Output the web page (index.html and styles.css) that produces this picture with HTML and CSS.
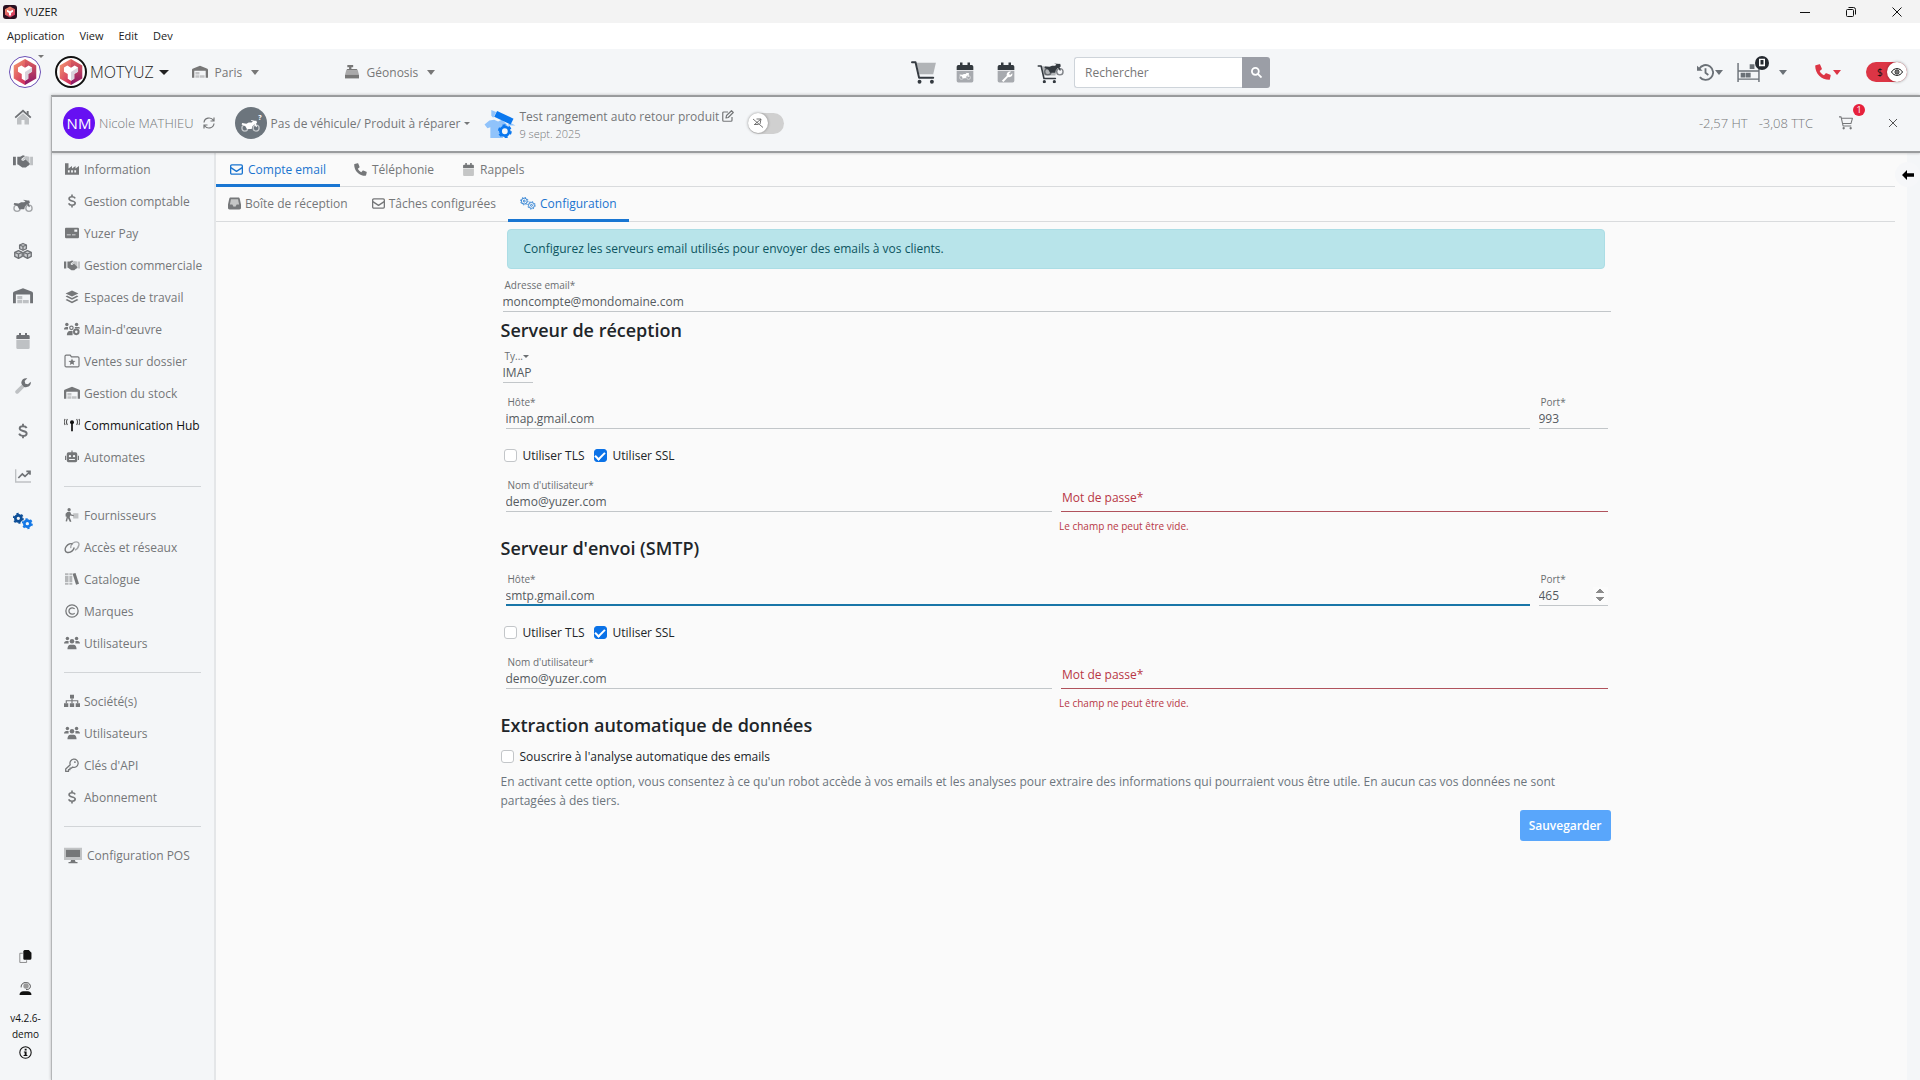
FILE: index.html
```html
<!DOCTYPE html>
<html lang="fr">
<head>
    <meta charset="UTF-8">
    <meta name="viewport" content="width=device-width, initial-scale=1.0">
    <title>YUZER</title>
    <link rel="stylesheet" href="styles.css">
</head>
<body>
    <!-- icons shared by the menus -->
    <svg class="sprite" xmlns="http://www.w3.org/2000/svg">
        <defs>
            <linearGradient id="g-left" x1="0" y1="0" x2="0.6" y2="1">
                <stop offset="0" stop-color="#f6a070"/><stop offset="1" stop-color="#d3365f"/>
            </linearGradient>
            <linearGradient id="g-right" x1="0" y1="0" x2="0" y2="1">
                <stop offset="0" stop-color="#e0605e"/><stop offset="1" stop-color="#8c1668"/>
            </linearGradient>
        </defs>
        <symbol id="i-logo" viewBox="0 0 24 24">
            <path fill="url(#g-left)" d="M12 0L1.600 6v12L12 24z"/>
            <path fill="url(#g-right)" d="M12 0l10.400 6v12L12 24z"/>
            <path fill="#fff" d="M5.500 7.800L8.600 6 12 8l3.400-2 3.100 1.800v4L15 13.800v4.400L12 20l-3-1.800v-4.400l-3.500-2z"/>
            <path fill="#d9d3dc" d="M12 12l6.500-4.200v4L15 13.800v4.400L12 20z"/>
        </symbol>
        <symbol id="i-home" viewBox="0 0 24 24">
            <path opacity=".4" d="M12 7l8 7v8h-6v-6h-4v6H4v-8z"/>
            <path d="M12 2L.8 12l1.600 1.800L12 5.300l9.600 8.500 1.600-1.800L19.500 8.700V4h-2.500v2.500z"/>
        </symbol>
        <symbol id="i-handshake" viewBox="0 0 28 24">
            <path d="M0 6h4v12H0zM6 6h4l4-2 3 1-5 4c-1 2 1 3.500 3 2.500l2.500-2 6 6c0 2-1 3-2.500 3L18 21l-5 0-6-4H6z"/>
            <path opacity=".4" d="M24 6h4v12h-4zM18 5l5 1v9l-6-6-3 2-1-1z"/>
        </symbol>
        <symbol id="i-moto" viewBox="0 0 32 20">
            <g opacity=".6" fill="none" stroke="currentColor" stroke-width="2.200"><circle cx="6.500" cy="13.500" r="5"/><circle cx="25.500" cy="13.500" r="5"/></g>
            <path d="M2 5l7 1 4-2h5l2-2-3-1V0l6 1 3 0 1 4-2 1 2 5-1.500 1-3-5-3.500 4-1 4h-8l-3-5-6-2.500z"/>
        </symbol>
        <symbol id="i-cubes" viewBox="0 0 24 24">
            <g fill="currentColor" fill-opacity=".3" stroke="currentColor" stroke-width="1.800" stroke-linejoin="round"><path d="M12 2l4.500 2v5L12 11 7.500 9V4zM6 11.500l5 2.200v5.600L6 21.800 1 19.300v-5.600zM18 11.500l5 2.200v5.600l-5 2.500-5-2.500v-5.600z"/><path d="M7.500 4L12 6l4.500-2M12 6v5M1 13.700L6 16l5-2.300M6 16v5.500M13 13.700l5 2.300 5-2.300M18 16v5.500" fill="none"/></g>
        </symbol>
        <symbol id="i-warehouse" viewBox="0 0 28 24">
            <path d="M0 22V8.500C0 7 .7 6.300 2 5.700L14 1l12 4.700c1.300.6 2 1.300 2 2.800V22h-4V10H4v12z"/>
            <path opacity=".4" d="M6 12h7v4.500H6zM6 17.500h7V22H6zM14 17.500h8V22h-8z"/>
        </symbol>
        <symbol id="i-calendar" viewBox="0 0 24 24">
            <path opacity=".4" d="M2 10h20v12a2 2 0 0 1-2 2H4a2 2 0 0 1-2-2z"/>
            <path d="M2 9V5a2 2 0 0 1 2-2h2V0h3v3h6V0h3v3h2a2 2 0 0 1 2 2v4z"/>
        </symbol>
        <symbol id="i-wrench" viewBox="0 0 24 24">
            <path opacity=".4" d="M10 10l4 4-8.800 8.800a2.500 2.500 0 0 1-4-4z"/>
            <path d="M23.500 5.500l-4 4-4-1-1-4 4-4C14 -.5 10 2 9.500 6.500c0 2 .5 3 1.500 4.500l2 2c5 2.500 12-1 10.500-7.500z"/>
        </symbol>
        <symbol id="i-dollar" viewBox="0 0 24 24">
            <path fill="none" stroke="currentColor" stroke-width="2.800" d="M17.500 7.500C16.500 5.500 14.500 4.800 12 4.800c-3 0-5 1.300-5 3.500 0 5 10.500 2.300 10.500 7.300 0 2.400-2.300 3.700-5.500 3.700-3 0-5-1.300-5.800-3.300M12 1v4M12 19v4"/>
        </symbol>
        <symbol id="i-chart" viewBox="0 0 24 24">
            <path opacity=".4" d="M0 2h2v18h22v2H0z"/>
            <path fill="none" stroke="currentColor" stroke-width="2.500" d="M5 15l6-6 4 3.500L22 6M17 5h5.500v5"/>
        </symbol>
        <symbol id="i-gears" viewBox="0 0 30 24">
            <g fill="none" stroke="currentColor"><circle cx="8" cy="8" r="4.500" stroke-width="4"/><circle cx="8" cy="8" r="7" stroke-width="2.500" stroke-dasharray="3.300 4.030"/></g>
            <g fill="none" stroke="#1478e6"><circle cx="21.500" cy="16" r="4.500" stroke-width="4"/><circle cx="21.500" cy="16" r="7" stroke-width="2.500" stroke-dasharray="3.300 4.030"/></g>
        </symbol>
        <symbol id="i-gears-o" viewBox="0 0 30 24">
            <g fill="none" stroke="currentColor" stroke-width="1.600"><circle cx="8" cy="7.500" r="5.500"/><circle cx="8" cy="7.500" r="1.800"/><circle cx="8" cy="7.500" r="7" stroke-dasharray="2.500 3"/><circle cx="21.500" cy="15.500" r="5.500"/><circle cx="21.500" cy="15.500" r="1.800"/><circle cx="21.500" cy="15.500" r="7" stroke-dasharray="2.500 3"/></g>
        </symbol>
        <symbol id="i-factory" viewBox="0 0 24 24">
            <path fill-rule="evenodd" d="M0 2h6v9l6-4v4l6-4v4l6-4v15H0zM5 14v4h3v-4zm5.500 0v4h3v-4zm5.500 0v4h3v-4z"/>
        </symbol>
        <symbol id="i-card" viewBox="0 0 24 24">
            <path fill-rule="evenodd" d="M2 3h20a2 2 0 0 1 2 2v14a2 2 0 0 1-2 2H2a2 2 0 0 1-2-2V5c0-1.200.8-2 2-2zm14 3v4h5V6zM3 14.500V16h7v-1.500zm9 0V16h6v-1.500z"/>
        </symbol>
        <symbol id="i-layers" viewBox="0 0 24 24">
            <path d="M12 1l11 5-11 5L1 6z"/><path d="M3.500 9.500L12 13.500l8.500-4L23 11l-11 5.500L1 11z"/><path d="M3.500 15.500L12 19.500l8.500-4L23 17l-11 5.500L1 17z"/>
        </symbol>
        <symbol id="i-users" viewBox="0 0 28 24">
            <circle cx="6" cy="4" r="3"/><circle cx="22" cy="4" r="3"/><circle cx="14" cy="9" r="4"/>
            <path d="M0 13c0-3 2-4.500 4-4.500h4V13zM28 13c0-3-2-4.500-4-4.500h-4V13zM6 23c0-5 2-8 5-8h6c3 0 5 3 5 8z"/>
        </symbol>
        <symbol id="i-staff" viewBox="0 0 28 24">
            <circle cx="5" cy="4" r="3"/><circle cx="22" cy="4" r="3"/><circle cx="13" cy="10" r="3" fill="none" stroke="currentColor" stroke-width="2"/>
            <path d="M0 13c0-3 1-4.500 4-4.500h3V13zM28 11c0-2-1.500-2.500-4-2.500h-5V11zM5 23c0-4.500 2-7.500 5-7.500h5V23z"/>
            <circle cx="21.500" cy="17" r="4" fill="none" stroke="currentColor" stroke-width="3.500"/>
        </symbol>
        <symbol id="i-folder" viewBox="0 0 26 24">
            <path fill="none" stroke="currentColor" stroke-width="2" stroke-linejoin="round" d="M3 2h7l2 3h11a2 2 0 0 1 2 2v13a2 2 0 0 1-2 2H3a2 2 0 0 1-2-2V4c0-1.200.8-2 2-2z"/>
            <path d="M13 7.500l1.700 4 4.300.4-3.300 2.800 1 4.200-3.700-2.300-3.700 2.300 1-4.200L7 11.900l4.300-.4z"/>
        </symbol>
        <symbol id="i-antenna" viewBox="0 0 28 24">
            <circle cx="14" cy="7" r="3.500"/><path d="M12.500 8h3v15h-3z"/>
            <path opacity=".7" fill="none" stroke="currentColor" stroke-width="2" d="M6 1.500c-2 3-2 7.500 0 10.500M2 1.500c-2 3-2 7.500 0 10.500M22 1.500c2 3 2 7.500 0 10.500M26 1.500c2 3 2 7.500 0 10.500"/>
        </symbol>
        <symbol id="i-robot" viewBox="0 0 24 24">
            <path fill-rule="evenodd" d="M11 1h2v3h5a3 3 0 0 1 3 3v11a3 3 0 0 1-3 3H6a3 3 0 0 1-3-3V7a3 3 0 0 1 3-3h5zM8.500 8.500a2 2 0 1 0 0 4 2 2 0 0 0 0-4zm7 0a2 2 0 1 0 0 4 2 2 0 0 0 0-4zM7 15.500V17h10v-1.500z"/><path d="M0 10h2v7H0zM22 10h2v7h-2z"/>
        </symbol>
        <symbol id="i-carry" viewBox="0 0 24 24">
            <circle cx="7" cy="3" r="2.800"/><path d="M4 7h5l2 4 4 1v2l-6-1-1 3 3 7-2.500 1L5 17l-1.500 6L1 22.500 3 15l-2-.5V10z"/><path opacity=".4" d="M14 9h9v9h-9z"/>
        </symbol>
        <symbol id="i-link" viewBox="0 0 28 24">
            <g fill="none" stroke="currentColor" stroke-width="2.500"><path d="M18 13c-2 6-7 9-12 8.500C1 20.500 1 15 4 11s8-6 11-4"/><path opacity=".6" d="M12 14c-1-4 2-9 7-10.500S27 5 26 9s-4 7.500-7 8.500"/></g>
        </symbol>
        <symbol id="i-books" viewBox="0 0 24 24">
            <path opacity=".5" d="M0 2h6v3H0zM0 6.500h6v11H0zM0 19h6v3H0zM7.500 2h5v3h-5zM7.500 6.500h5v11h-5zM7.500 19h5v3h-5z"/><path d="M13 3l5-1.500L24 20l-5 2z"/>
        </symbol>
        <symbol id="i-copyright" viewBox="0 0 24 24">
            <g fill="none" stroke="currentColor" stroke-width="2.200"><circle cx="12" cy="12" r="10.500"/><path d="M16.500 15.500A5.500 5.500 0 1 1 16.500 8.500"/></g>
        </symbol>
        <symbol id="i-sitemap" viewBox="0 0 28 24">
            <path d="M10.500 1h7v6.500h-7zM0 16h7.500v6.500H0zM10.200 16h7.600v6.500h-7.600zM20.500 16H28v6.500h-7.500z"/>
            <path fill="none" stroke="currentColor" stroke-width="2" d="M14 7v9M4 16v-4.500h20V16"/>
        </symbol>
        <symbol id="i-key" viewBox="0 0 24 24">
            <path fill="none" stroke="currentColor" stroke-width="2.200" stroke-linejoin="round" d="M9 11.500a7 7 0 1 1 4 4L11 17.500H8.500V20H6v3H1.200v-4z"/><circle cx="17" cy="7" r="1.600"/>
        </symbol>
        <symbol id="i-desktop" viewBox="0 0 28 24">
            <path opacity=".4" fill-rule="evenodd" d="M0 0h28v19H0zM3 3v11h22V3z"/><path d="M3 3h22v11.500H3zM11 19h6l1 3h3v2H7v-2h3z"/>
        </symbol>
        <symbol id="i-mail" viewBox="0 0 24 20">
            <g fill="none" stroke="currentColor" stroke-width="2.400" stroke-linejoin="round"><rect x="1.200" y="1.500" width="21.600" height="17" rx="2"/><path d="M1.500 6.500L12 13.500l10.500-7"/></g>
        </symbol>
        <symbol id="i-phone" viewBox="0 0 24 24">
            <path d="M1.200 1.700L6.500.5c.6-.1 1.100.1 1.300.6l2.400 5.700c.2.500.1 1-.3 1.400L7 10.500c1.500 3 3.500 5 6.500 6.500l2.300-2.900c.4-.4.900-.5 1.400-.3l5.700 2.400c.5.200.7.700.6 1.300l-1.200 5.300c-.1.500-.5.900-1 .9C9.500 23.700.3 14.500.3 2.700c0-.5.4-.9.9-1z"/>
        </symbol>
        <symbol id="i-inbox" viewBox="0 0 24 24">
            <path opacity=".4" d="M5 3h14l3 11-5 1-3 3h-4l-3-3-5-1z"/><path fill-rule="evenodd" d="M5 1h14c1.500 0 2.300.8 2.700 2L24 14v6c0 2-1 3-3 3H3c-2 0-3-1-3-3v-6L2.300 3C2.700 1.800 3.500 1 5 1zm.5 3L3.500 14H8l2 3.500h4l2-3.500h4.500l-2-10z"/>
        </symbol>
        <symbol id="i-cart" viewBox="0 0 28 26">
            <path opacity=".35" d="M6 2h22l-3 13H9z"/>
            <path fill="none" stroke="currentColor" stroke-width="2.200" stroke-linecap="round" stroke-linejoin="round" d="M1 1.500h4L9 19h16"/>
            <circle cx="9.500" cy="23.500" r="2.200"/><circle cx="23.500" cy="23.500" r="2.200"/>
        </symbol>
        <symbol id="i-cart-o" viewBox="0 0 24 24">
            <path fill="none" stroke="currentColor" stroke-width="1.800" stroke-linejoin="round" d="M0 1.500h3.500L7 17h14M4 4h19l-2.500 9H6"/>
            <circle cx="8" cy="21" r="2"/><circle cx="20" cy="21" r="2"/>
        </symbol>
    </svg>

    <div class="titlebar">
        <svg class="app-icon" viewBox="0 0 14 14"><rect width="14" height="14" rx="3" fill="#2a1020"/><path fill="url(#g-left)" d="M7 1.500L2 4.200v5.600l5 2.700 5-2.700V4.200z"/><path fill="#fff" d="M4 4.800L7 6.200l3-1.400v2L8 8v2.500H6V8L4 6.800z"/></svg>
        <span class="app-name">YUZER</span>
        <div class="window-buttons">
            <button aria-label="Réduire"><svg viewBox="0 0 10 10"><path d="M0 5.500h10"/></svg></button>
            <button aria-label="Restaurer"><svg viewBox="0 0 10 10"><rect x=".5" y="2.500" width="7" height="7" rx="1"/><path d="M2.500 .5h5a2 2 0 0 1 2 2v5"/></svg></button>
            <button aria-label="Fermer"><svg viewBox="0 0 10 10"><path d="M.5 .5l9 9M9.500 .5l-9 9"/></svg></button>
        </div>
    </div>

    <nav class="menubar">
        <a href="#">Application</a>
        <a href="#">View</a>
        <a href="#">Edit</a>
        <a href="#">Dev</a>
    </nav>

    <header class="topbar">
        <a class="rail-logo" href="#" aria-label="Yuzer"><svg><use href="#i-logo"/></svg></a>
        <span class="caret tiny"></span>
        <button class="company"><span class="logo-ring"><svg><use href="#i-logo"/></svg></span>MOTYUZ<span class="caret"></span></button>
        <button class="picker shop"><svg class="ico"><use href="#i-warehouse"/></svg>Paris<span class="caret"></span></button>
        <button class="picker till"><svg class="ico" viewBox="0 0 24 24"><path d="M4 0h10v4h-3v3h9l2 2H2l2-2h3V4H4z"/><path opacity=".6" d="M2 9h20l2 8H0z"/><path d="M0 17h24v6H0z"/></svg>Géonosis<span class="caret"></span></button>

        <div class="quick">
            <a href="#" aria-label="Panier"><svg class="q-cart"><use href="#i-cart"/></svg></a>
            <a href="#" aria-label="Agenda véhicules"><svg class="q-cal" viewBox="0 0 24 26"><use href="#i-calendar" width="24" height="26"/><svg x="4" y="13" width="16" height="9" color="#fff"><use href="#i-moto"/></svg></svg></a>
            <a href="#" aria-label="Agenda atelier"><svg class="q-cal" viewBox="0 0 24 26"><use href="#i-calendar" width="24" height="26"/><path d="M7 23l6-6c-1-3 2-6 5-5l-2.500 2.500 1.500 1.500 2.500-2c1 3-2 5.500-5 4.500l-5.500 6z" fill="#fff"/></svg></a>
            <a href="#" aria-label="Panier véhicule"><svg class="q-moto" viewBox="0 0 32 26"><svg width="25" height="22" y="4"><use href="#i-cart"/></svg><svg x="8" y="2" width="24" height="15"><use href="#i-moto"/></svg></svg></a>
            <form class="search">
                <input type="search" placeholder="Rechercher" aria-label="Rechercher">
                <button type="button" aria-label="Lancer la recherche"><svg viewBox="0 0 24 24"><circle cx="9.500" cy="9.500" r="7.500"/><path d="M15 15l8 8"/></svg></button>
            </form>
        </div>

        <div class="tools">
            <button class="tool history" aria-label="Historique"><svg viewBox="0 0 24 24" fill="none" stroke="currentColor" stroke-width="2.600"><path d="M3 7A10.500 10.500 0 1 1 4 18.500M12 6v6.500l4 3"/><path d="M0 2.500v7h8z" fill="currentColor" stroke="none"/></svg><span class="caret"></span></button>
            <button class="tool bunk" aria-label="Atelier">
                <svg viewBox="0 0 24 20" fill="none" stroke="currentColor" stroke-width="1.500"><path d="M1 0v20M23 5v15M1 8.500h22M1 17h22"/><path d="M4.500 11h3.500v3.500H4.500zM10 11h3.500v3.500H10zM14 2h3.500v3.500H14z" fill="currentColor"/></svg>
                <span class="device-badge"><svg viewBox="0 0 8 10"><path fill="#fff" fill-rule="evenodd" d="M0 0h8v10H0zM2 1.500v6h4v-6z"/></svg></span>
                <span class="caret tiny"></span>
            </button>
            <button class="tool call" aria-label="Appels"><svg><use href="#i-phone"/></svg><span class="caret"></span></button>
            <label class="money-switch"><input type="checkbox" checked aria-label="Afficher les prix"><span>$</span><span class="knob"><svg viewBox="0 0 24 16" fill="none" stroke="#111" stroke-width="2"><path d="M1 8c5-9 17-9 22 0-5 9-17 9-22 0z"/><circle cx="12" cy="8" r="4"/><circle cx="12" cy="8" r="1"/></svg></span></label>
        </div>
    </header>

    <div class="body">
        <nav class="rail">
            <a href="#" aria-label="Accueil"><svg><use href="#i-home"/></svg></a>
            <a href="#" aria-label="Clients"><svg><use href="#i-handshake"/></svg></a>
            <a href="#" aria-label="Véhicules"><svg><use href="#i-moto"/></svg></a>
            <a href="#" aria-label="Produits"><svg><use href="#i-cubes"/></svg></a>
            <a href="#" aria-label="Stock"><svg><use href="#i-warehouse"/></svg></a>
            <a href="#" aria-label="Agenda"><svg class="small"><use href="#i-calendar"/></svg></a>
            <a href="#" aria-label="Atelier"><svg class="small"><use href="#i-wrench"/></svg></a>
            <a href="#" aria-label="Comptabilité"><svg class="small"><use href="#i-dollar"/></svg></a>
            <a href="#" aria-label="Statistiques"><svg class="small"><use href="#i-chart"/></svg></a>
            <a href="#" aria-label="Configuration" class="current"><svg><use href="#i-gears"/></svg></a>
            <div class="rail-foot">
                <button aria-label="Copier"><svg viewBox="0 0 24 24"><path fill="none" stroke="#777" stroke-width="1.500" d="M7 6H1.500v17H14v-4"/><path d="M10 0h8l5 5v10a3 3 0 0 1-3 3H10a2 2 0 0 1-2-2V2z"/></svg></button>
                <button aria-label="Support"><svg viewBox="0 0 24 24"><circle cx="13" cy="7.500" r="5" fill="#999"/><path fill="none" stroke="#333" stroke-width="1.500" d="M4 10C3-2 22-2 21 9c-1 4-4 5-8 5"/><path d="M1 24c0-5 3-7 7-7h8c4 0 7 2 7 7z"/></svg></button>
                <span>v4.2.6-demo</span>
                <button aria-label="Informations"><svg viewBox="0 0 24 24"><circle cx="12" cy="12" r="10.500" fill="none" stroke="#111" stroke-width="2"/><path d="M10.500 5h3.500v3.500h-3.500zM9 10h5v6.500h1.500v2h-7v-2h2v-4.500H9z"/></svg></button>
            </div>
        </nav>

        <div class="main">
            <div class="folder-bar">
                <span class="avatar nm">NM</span>
                <a class="client" href="#">Nicole MATHIEU</a>
                <button class="refresh" aria-label="Changer de client"><svg viewBox="0 0 24 24" fill="none" stroke="currentColor" stroke-width="2.400"><path d="M2 11C3 1 16-1 21 7M22 1v7h-7M22 13c-1 10-14 12-19 4M2 23v-7h7"/></svg></button>
                <span class="avatar vehicle"><svg><use href="#i-moto"/></svg><b>?</b></span>
                <button class="vehicle-picker">Pas de véhicule/ Produit à réparer<span class="caret tiny"></span></button>
                <svg class="shirt" viewBox="0 0 32 30">
                    <path fill="#90c3fb" d="M5 12l5-1 4 2 4-2 6 6-3 3-2-1v11H6V19l-3 1-3-4z"/>
                    <path fill="#90c3fb" d="M7 1l5 2-3 6-2-2zM26 14l6 3-8 0z"/>
                    <path fill="#0b78ef" d="M13 2l17 8-3 6-17-8z"/>
                    <circle cx="21" cy="23" r="4.500" fill="#f4f6f8" stroke="#0b78ef" stroke-width="3"/><circle cx="21" cy="23" r="6.200" fill="none" stroke="#0b78ef" stroke-width="2" stroke-dasharray="3.200 3.300"/>
                </svg>
                <div class="folder-title">
                    <div>Test rangement auto retour produit <button aria-label="Modifier le titre"><svg viewBox="0 0 24 24" fill="none" stroke="currentColor" stroke-width="2.400" stroke-linejoin="round"><path d="M12 4H3.500A2 2 0 0 0 1.500 6v14.500a2 2 0 0 0 2 2H18a2 2 0 0 0 2-2V14"/><path d="M9 11L19 1.500l3.500 3.500L12.500 15l-4.500 1z"/></svg></button></div>
                    <small>9 sept. 2025</small>
                </div>
                <label class="pin-switch"><input type="checkbox" aria-label="Épingler"><span class="knob"><svg viewBox="0 0 24 24" fill="none" stroke="#444" stroke-width="1.500"><path d="M2 4l20 17M9 4h9l-2 10M6 14l11-9M4 15h9"/></svg></span></label>
                <div class="totals">
                    <span>-2,57 HT</span>
                    <span>-3,08 TTC</span>
                    <a class="basket" href="#" aria-label="Panier"><svg><use href="#i-cart-o"/></svg><span class="count">1</span></a>
                    <button class="close" aria-label="Fermer le dossier"><svg viewBox="0 0 10 10"><path d="M1 1l8 8M9 1l-8 8"/></svg></button>
                </div>
            </div>

            <div class="lower">
                <nav class="sidenav">
                    <a href="#"><svg><use href="#i-factory"/></svg>Information</a>
                    <a href="#"><svg><use href="#i-dollar"/></svg>Gestion comptable</a>
                    <a href="#"><svg><use href="#i-card"/></svg>Yuzer Pay</a>
                    <a href="#"><svg><use href="#i-handshake"/></svg>Gestion commerciale</a>
                    <a href="#"><svg><use href="#i-layers"/></svg>Espaces de travail</a>
                    <a href="#"><svg><use href="#i-staff"/></svg>Main-d'œuvre</a>
                    <a href="#"><svg><use href="#i-folder"/></svg>Ventes sur dossier</a>
                    <a href="#"><svg><use href="#i-warehouse"/></svg>Gestion du stock</a>
                    <a href="#" class="current"><svg><use href="#i-antenna"/></svg>Communication Hub</a>
                    <a href="#"><svg><use href="#i-robot"/></svg>Automates</a>
                    <hr>
                    <a href="#"><svg><use href="#i-carry"/></svg>Fournisseurs</a>
                    <a href="#"><svg><use href="#i-link"/></svg>Accès et réseaux</a>
                    <a href="#"><svg><use href="#i-books"/></svg>Catalogue</a>
                    <a href="#"><svg><use href="#i-copyright"/></svg>Marques</a>
                    <a href="#"><svg><use href="#i-users"/></svg>Utilisateurs</a>
                    <hr>
                    <a href="#"><svg><use href="#i-sitemap"/></svg>Société(s)</a>
                    <a href="#"><svg><use href="#i-users"/></svg>Utilisateurs</a>
                    <a href="#"><svg><use href="#i-key"/></svg>Clés d'API</a>
                    <a href="#"><svg><use href="#i-dollar"/></svg>Abonnement</a>
                    <hr>
                    <a href="#" class="pos"><svg><use href="#i-desktop"/></svg>Configuration POS</a>
                </nav>

                <main class="content">
                    <nav class="tabs">
                        <a href="#" class="active"><svg><use href="#i-mail"/></svg>Compte email</a>
                        <a href="#"><svg><use href="#i-phone"/></svg>Téléphonie</a>
                        <a href="#"><svg><use href="#i-calendar"/></svg>Rappels</a>
                    </nav>
                    <nav class="tabs sub">
                        <a href="#"><svg><use href="#i-inbox"/></svg>Boîte de réception</a>
                        <a href="#"><svg><use href="#i-mail"/></svg>Tâches configurées</a>
                        <a href="#" class="active"><svg class="wide"><use href="#i-gears-o"/></svg>Configuration</a>
                    </nav>

                    <form class="mail-form">
                        <div class="alert">Configurez les serveurs email utilisés pour envoyer des emails à vos clients.</div>

                        <div class="field email">
                            <label for="email">Adresse email*</label>
                            <input type="email" id="email" value="moncompte@mondomaine.com">
                        </div>

                        <h2>Serveur de réception</h2>
                        <div class="field type">
                            <label for="type">Ty...<span class="caret tiny"></span></label>
                            <select id="type">
                                <option>IMAP</option>
                                <option>POP3</option>
                            </select>
                        </div>
                        <div class="row host">
                            <div class="field">
                                <label for="in-host">Hôte*</label>
                                <input type="text" id="in-host" value="imap.gmail.com">
                            </div>
                            <div class="field">
                                <label for="in-port">Port*</label>
                                <input type="number" id="in-port" value="993">
                            </div>
                        </div>
                        <div class="checks">
                            <label><input type="checkbox">Utiliser TLS</label>
                            <label><input type="checkbox" checked>Utiliser SSL</label>
                        </div>
                        <div class="row login">
                            <div class="field">
                                <label for="in-user">Nom d'utilisateur*</label>
                                <input type="text" id="in-user" value="demo@yuzer.com">
                            </div>
                            <div>
                                <div class="field invalid">
                                    <label for="in-pass">Mot de passe*</label>
                                    <input type="password" id="in-pass">
                                </div>
                                <p class="error">Le champ ne peut être vide.</p>
                            </div>
                        </div>

                        <h2>Serveur d'envoi (SMTP)</h2>
                        <div class="row host">
                            <div class="field focused">
                                <label for="out-host">Hôte*</label>
                                <input type="text" id="out-host" value="smtp.gmail.com">
                            </div>
                            <div class="field spin">
                                <label for="out-port">Port*</label>
                                <input type="number" id="out-port" value="465">
                            </div>
                        </div>
                        <div class="checks">
                            <label><input type="checkbox">Utiliser TLS</label>
                            <label><input type="checkbox" checked>Utiliser SSL</label>
                        </div>
                        <div class="row login">
                            <div class="field">
                                <label for="out-user">Nom d'utilisateur*</label>
                                <input type="text" id="out-user" value="demo@yuzer.com">
                            </div>
                            <div>
                                <div class="field invalid">
                                    <label for="out-pass">Mot de passe*</label>
                                    <input type="password" id="out-pass">
                                </div>
                                <p class="error">Le champ ne peut être vide.</p>
                            </div>
                        </div>

                        <h2>Extraction automatique de données</h2>
                        <div class="checks consent">
                            <label><input type="checkbox">Souscrire à l'analyse automatique des emails</label>
                        </div>
                        <p class="help">En activant cette option, vous consentez à ce qu'un robot accède à vos emails et les analyses pour extraire des informations qui pourraient vous être utile. En aucun cas vos données ne sont partagées à des tiers.</p>
                        <button type="button" class="save">Sauvegarder</button>
                    </form>
                </main>

                <aside class="drawer">
                    <button aria-label="Ouvrir le panneau"><svg viewBox="0 0 12 10"><path d="M0 5l5-5v3.300h7v3.400H5V10z"/></svg></button>
                </aside>
            </div>
        </div>
    </div>
</body>
</html>
```
FILE: styles.css
```css
* { box-sizing: border-box; }
body { margin: 0; height: 100vh; display: flex; flex-direction: column; overflow: hidden; background: #f4f6f8; color: #757779; font-family: "Open Sans", "Noto Sans", sans-serif; font-size: 12px; }
a { color: inherit; text-decoration: none; }
button, input, select { font: inherit; color: inherit; }
button { background: none; border: 0; padding: 0; cursor: pointer; }
svg { flex: none; }
svg:not([fill]) { fill: currentColor; }
.sprite { position: absolute; width: 0; height: 0; }

.caret { display: inline-block; border: 5px solid transparent; border-top-color: currentColor; border-bottom: 0; }
.caret.tiny { border-width: 3px 3px 0; }

/* window chrome */
.titlebar { display: flex; align-items: center; height: 23px; padding-left: 3px; background: #f3f3f3; color: #111; }
.app-icon { width: 14px; height: 14px; margin-right: 7px; }
.app-name { font-size: 11px; }
.window-buttons { display: flex; margin-left: auto; }
.window-buttons button { display: grid; place-items: center; width: 46px; height: 21px; }
.window-buttons svg { width: 10px; height: 10px; fill: none; stroke: #111; }
.menubar { display: flex; align-items: center; gap: 15px; height: 26px; padding: 0 0 2px 7px; background: #fff; color: #222; font-size: 11px; }

/* top bar */
.topbar { display: flex; align-items: center; height: 46px; color: #777; }
.rail-logo, .logo-ring { display: grid; place-items: center; width: 32px; height: 32px; border: 1px solid #6a4fb5; border-radius: 50%; background: #fff; }
.rail-logo { margin-left: 9px; }
.rail-logo svg, .logo-ring svg { width: 26px; height: 26px; }
.topbar > .caret.tiny { align-self: flex-start; margin-top: 6px; margin-right: 11px; margin-left: -3px; }
.company { display: flex; align-items: center; gap: 3px; color: #222; font-size: 16px; font-weight: 300; }
.logo-ring { border: 2px solid #111; }
.company .caret { margin-left: 2px; }
.picker { display: flex; align-items: center; }
.picker .ico { width: 16px; height: 14px; margin-right: 7px; }
.picker .caret { margin-left: 9px; border-width: 5px 4px 0; }
.picker.shop { width: 152px; margin-left: 23px; }
.quick { display: flex; align-items: center; margin-left: auto; color: #343a40; }
.quick a { display: flex; margin-right: 19px; }
.quick a:nth-of-type(2), .quick a:nth-of-type(3) { margin-right: 21px; }
.quick a:nth-of-type(4) { margin-right: 10px; }
.q-cart { width: 25px; height: 23px; }
.q-cal { width: 20px; height: 23px; }
.q-moto { width: 27px; height: 23px; }
.search { display: flex; height: 31px; }
.search input { width: 168px; padding: 0 10px; border: 1px solid #ced4da; border-right: 0; border-radius: 3px 0 0 3px; background: #fff; outline: 0; }
.search input::placeholder { color: #777; }
.search button { display: grid; place-items: center; width: 28px; border-radius: 0 3px 3px 0; background: #9b9ea6; }
.search svg { width: 11px; height: 11px; fill: none; stroke: #fff; stroke-width: 4; }
.tools { display: flex; align-items: center; margin-left: 427px; margin-right: 13px; }
.tool { position: relative; display: flex; align-items: center; color: #6b7177; }
.tool .caret { border-width: 5px 4px 0; }
.history { margin-right: 14px; }
.history svg { width: 17px; height: 17px; margin-right: 1px; }
.bunk svg { width: 23px; height: 19px; }
.bunk .caret { margin-left: 19px; }
.device-badge { position: absolute; left: 18px; top: -7px; display: grid; place-items: center; width: 14px; height: 14px; border-radius: 50%; background: #252a30; }
.bunk .device-badge svg { width: 6px; height: 9px; }
.call { margin-left: 28px; color: #dc3545; }
.call svg { width: 16px; height: 16px; margin-right: 2px; }
.money-switch { display: flex; align-items: center; width: 41px; height: 20px; margin-left: 25px; padding-left: 11px; border-radius: 10px; background: #dc3545; color: #111; font-size: 10px; }
.money-switch input, .pin-switch input { position: absolute; opacity: 0; }
.knob { display: grid; place-items: center; width: 20px; height: 20px; border-radius: 50%; background: #fff; box-shadow: 0 0 3px rgba(0, 0, 0, .4); }
.money-switch .knob { margin-left: auto; }
.knob svg { width: 12px; height: 12px; }

/* left rail */
.body { display: flex; flex: 1; min-height: 0; }
.rail { display: flex; flex-direction: column; align-items: center; width: 51px; padding-right: 5px; color: #6f7276; }
.rail > a { display: grid; place-items: center; width: 30px; height: 45px; }
.rail > a:first-child { height: 43px; }
.rail > a svg { width: 20px; height: 18px; }
.rail > a svg.small { width: 16px; height: 16px; }
.rail .current { color: #0d4f98; }
.rail-foot { display: flex; flex-direction: column; align-items: center; margin-top: auto; margin-left: 5px; padding-bottom: 18px; color: #111; font-size: 10px; line-height: 16px; text-align: center; }
.rail-foot button { display: grid; place-items: center; height: 20px; margin-bottom: 12px; }
.rail-foot button:last-child { margin: 0; }
.rail-foot span { width: 42px; }
.rail-foot svg { width: 13px; height: 13px; }

.main { display: flex; flex: 1; flex-direction: column; min-width: 0; border-top: 2px solid #9a9c9e; border-left: 1px solid #b4b6b8; box-shadow: 0 0 3px rgba(0, 0, 0, .25); }

/* current folder */
.folder-bar { position: relative; display: flex; align-items: center; height: 56px; padding: 0 22px 2px 11px; border-bottom: 2px solid #9a9c9e; box-shadow: 0 1px 2px rgba(0, 0, 0, .15); }
.avatar { display: grid; place-items: center; width: 32px; height: 32px; border-radius: 50%; }
.avatar.nm { margin-right: 4px; background: #6610f2; color: #fff; font-size: 15px; }
.client, .totals { font-size: 13px; font-weight: 300; }
.refresh { display: flex; margin: 0 20px 0 9px; }
.refresh svg { width: 12px; height: 12px; }
.avatar.vehicle { position: relative; margin-right: 4px; background: #6c757d; color: #fff; }
.avatar.vehicle svg { width: 19px; height: 12px; margin-top: 5px; }
.avatar.vehicle b { position: absolute; right: 5px; top: 7px; font-size: 7px; line-height: 8px; }
.vehicle-picker { display: flex; align-items: center; gap: 4px; }
.shirt { width: 32px; height: 29px; margin: 0 3px 0 14px; }
.folder-title { padding-top: 4px; line-height: 17px; }
.folder-title small { display: block; font-size: 11px; font-weight: 300; }
.folder-title svg { width: 12px; height: 12px; vertical-align: -1px; }
.pin-switch { display: flex; align-items: center; width: 36px; height: 21px; margin-left: 14px; border-radius: 11px; background: #d0d0d0; }
.totals { display: flex; align-items: center; gap: 11px; margin-left: auto; }
.basket { position: relative; display: flex; margin-left: 15px; }
.basket svg { width: 14px; height: 14px; }
.count { position: absolute; right: -12px; top: -12px; width: 12px; height: 12px; border-radius: 50%; background: #e6213c; color: #fff; font-size: 9px; font-weight: 400; line-height: 12px; text-align: center; }
.close { display: flex; margin-left: 24px; }
.close svg { width: 10px; height: 10px; fill: none; stroke: #555; }

/* settings menu */
.lower { display: flex; flex: 1; min-height: 0; }
.sidenav { width: 164px; padding: 0 13px 0 12px; border-right: 2px solid #e4e6e8; white-space: nowrap; }
.sidenav a { display: flex; align-items: center; height: 32px; }
.sidenav svg { width: 16px; height: 14px; margin-right: 4px; }
.sidenav .current { color: #111; }
.sidenav hr { height: 1px; margin: 13px 0 12px; border: 0; background: #d2d5d8; }
.sidenav .pos svg { width: 18px; height: 17px; margin-right: 5px; }

/* page */
.content { flex: 1; min-width: 0; padding-right: 12px; background: #fafafa; }
.tabs { display: flex; height: 34px; border-bottom: 1px solid #d9dbdd; }
.tabs a { display: flex; align-items: center; height: 34px; padding: 1px 14px 0; border-bottom: 3px solid transparent; }
.tabs svg { width: 13px; height: 13px; margin-right: 5px; }
.tabs.sub { height: 35px; }
.tabs.sub a { height: 35px; padding: 1px 12px 0; }
.tabs.sub svg { margin-right: 4px; }
.tabs svg.wide { width: 16px; }
.tabs .active { border-color: #1976d2; color: #1a74cf; }

.mail-form { width: calc(100% - 24px); max-width: 1110px; margin: 0 auto; padding-top: 7px; }
.alert { height: 40px; margin: 0 6px; padding: 0 16px; border: 1px solid #abdde5; border-radius: 4px; background: #b8e4ea; color: #0c5460; line-height: 38px; }
h2 { margin: 0; color: #212529; font-size: 18px; font-weight: 600; line-height: 24px; }
.field { color: #555a5f; }
.field label { display: block; padding-left: 2px; color: #6b6e71; font-size: 10px; line-height: 14px; }
.field input, .field select { display: block; width: 100%; height: 20px; padding: 0; border: 0; border-bottom: 1px solid #c2c6c9; border-radius: 0; background: transparent; outline: 0; }
.field.email { margin: 9px 0 6px 2px; }
.field.type { width: 30px; margin: 7px 0 0 2px; }
.field select { appearance: none; }
.type label { display: flex; align-items: center; }
.row { display: grid; gap: 9px; margin: 12px 3px 0 5px; }
.row.host { grid-template-columns: 1fr 69px; }
.row.login { grid-template-columns: 1fr 1fr; }
.focused input { border-bottom: 2px solid #1976a8; }
.spin input::-webkit-inner-spin-button { opacity: 1; }
.field.invalid { display: grid; color: #b02a37; }
.invalid label, .invalid input { grid-area: 1 / 1; }
.invalid label { padding: 13px 0 0 1px; height: 34px; color: #b83745; font-size: 12px; }
.invalid input { align-self: end; border-color: #b0525c; }
.error { margin: 7px 0 3px -2px; color: #b83745; font-size: 10px; line-height: 14px; }
.checks { display: flex; gap: 9px; height: 20px; margin: 16px 0 0 3px; color: #212529; }
.checks + .row { margin-top: 13px; }
.checks label { display: flex; align-items: center; gap: 6px; }
.checks input { display: grid; place-items: center; width: 13px; height: 13px; margin: 0; border: 1px solid #c3c6c9; border-radius: 3px; background: #fff; appearance: none; }
.checks input:checked { border-color: #0b72e7; background: #0b72e7; }
.checks input:checked::after { content: ""; width: 4px; height: 8px; border: solid #fff; border-width: 0 2px 2px 0; transform: rotate(45deg); }
.checks.consent { margin: 9px 0 6px; }
.help { margin: 0; color: #6c757d; line-height: 19px; }
.save { display: block; height: 31px; margin-left: auto; padding: 0 9px; border-radius: 3px; background: #59a6fb; color: #fff; font-weight: 600; }

.drawer { width: 13px; }
.drawer button { position: relative; right: 12px; display: grid; place-items: center; width: 25px; height: 25px; margin-top: 9px; border-radius: 50%; background: #f6f7f9; }
.drawer svg { width: 12px; height: 10px; fill: #000; }
```
